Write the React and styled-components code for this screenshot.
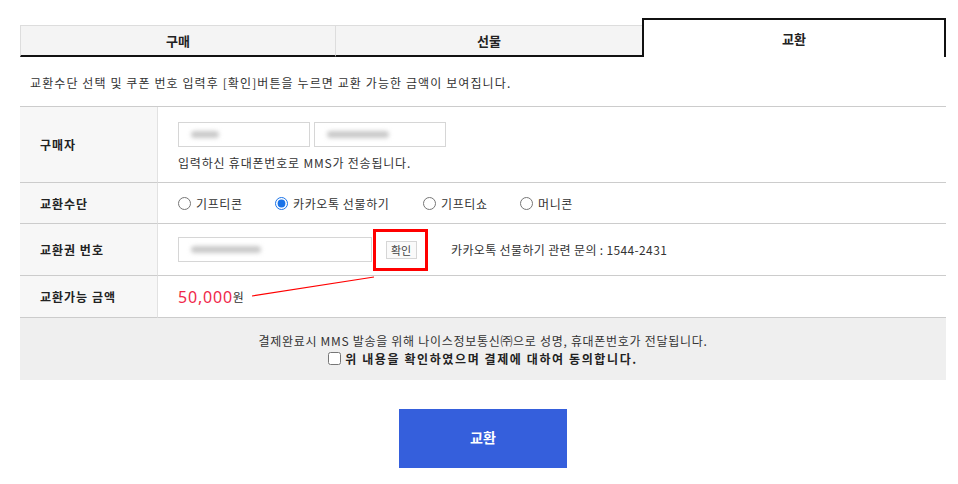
import styled, { createGlobalStyle } from 'styled-components'

const GlobalStyle = createGlobalStyle`
body {
  margin: 0;
  background: #fff;
  font-family: "Noto Sans CJK KR", "Noto Sans", sans-serif;
  color: #333;
}
`

const Page = styled.div`
width: 926px;
padding: 18px 0 0 20px;
`

const Tabs = styled.div`
display: flex;
height: 39px;
`

const Tab = styled.div`
width: ${({width}) => width};
flex: ${({grow}) => grow ? 1 : 'none'};
box-sizing: border-box;
display: flex;
align-items: center;
justify-content: center;
font-size: 13px;
font-weight: 700;
color: #222;
${({active}) => active ? `
  border: 2px solid #111;
  border-bottom: none;
  background: #fff;
` : `
  margin-top: 7px;
  background: #f4f4f4;
  border-top: 1px solid #ddd;
  border-left: 1px solid #ddd;
  border-bottom: 2px solid #111;
`}
`

const Notice = styled.p`
margin: 17px 0 14px 10px;
font-size: 12px;
line-height: 18px;
color: #333;
letter-spacing: 1.1px;
`

const Table = styled.div`
position: relative;
display: grid;
grid-template-columns: 138px 1fr;
border-top: 1px solid #ccc;
`

const Label = styled.div`
display: flex;
align-items: center;
height: ${({h}) => h}px;
box-sizing: border-box;
padding-left: 20px;
background: #f7f7f7;
border-right: 1px solid #e2e2e2;
border-bottom: 1px solid #ccc;
font-size: 12px;
font-weight: 700;
color: #222;
letter-spacing: 1px;
`

const Cell = styled.div`
display: flex;
flex-direction: ${({column}) => column ? 'column' : 'row'};
align-items: ${({column}) => column ? 'flex-start' : 'center'};
height: ${({h}) => h}px;
box-sizing: border-box;
padding: ${({column}) => column ? '15px 0 0 20px' : '0 0 0 20px'};
border-bottom: 1px solid #ccc;
font-size: 12px;
color: #333;
`

const InputRow = styled.div`
display: flex;
gap: 4px;
`

const Field = styled.div`
width: ${({w}) => w}px;
height: 25px;
box-sizing: border-box;
border: 1px solid #d6d6d6;
display: flex;
align-items: center;
padding-left: 12px;
`

const Blur = styled.span`
display: inline-block;
width: ${({w}) => w}px;
height: 7px;
border-radius: 4px;
background: #c9c9c9;
filter: blur(2px);
`

const Help = styled.div`
margin-top: 7px;
font-size: 12px;
color: #333;
letter-spacing: 0.8px;
`

const RadioGroup = styled.div`
display: flex;
align-items: center;
`

const RadioLabel = styled.label`
display: flex;
align-items: center;
width: ${({w}) => w}px;
font-size: 12px;
color: #333;
letter-spacing: 0.6px;

input {
  margin: 0 5px 0 0;
  width: 13px;
  height: 13px;
  accent-color: #1a73e8;
}
`

const Highlight = styled.div`
margin-left: 1px;
width: 55px;
height: 42px;
box-sizing: border-box;
border: 3px solid #f00;
display: flex;
align-items: center;
justify-content: center;
padding-left: 1px;
`

const SmallButton = styled.button`
width: 31px;
height: 18px;
padding: 0;
border: 1px solid #d6d6d6;
background: #fafafa;
font-family: inherit;
font-size: 11px;
color: #444;
`

const Contact = styled.span`
margin-left: 23px;
font-size: 12px;
color: #333;
letter-spacing: 0.35px;
`

const Amount = styled.span`
font-family: "Noto Sans", sans-serif;
font-size: 16px;
color: #f0284a;
letter-spacing: 0.8px;
`

const Won = styled.span`
font-size: 12px;
color: #333;
`

const Arrow = styled.svg`
position: absolute;
left: 210px;
top: 168px;
pointer-events: none;
`

const Agreement = styled.div`
background: #efefef;
height: 62px;
display: flex;
flex-direction: column;
align-items: center;
justify-content: center;
font-size: 12px;
color: #333;
letter-spacing: 0.7px;
`

const AgreeLine = styled.label`
display: flex;
align-items: center;
margin-top: 1px;
font-weight: 700;
color: #222;
letter-spacing: 1.6px;

input {
  margin: 0 4px 0 0;
  width: 13px;
  height: 13px;
}
`

const Footer = styled.div`
display: flex;
justify-content: center;
padding-top: 29px;
`

const SubmitButton = styled.button`
width: 168px;
height: 59px;
border: none;
background: #355fdc;
color: #fff;
font-family: inherit;
font-size: 14px;
font-weight: 700;
padding-bottom: 4px;
`

export default function App() {
  return (
    <>
      <GlobalStyle />
      <Page>
        <Tabs>
          <Tab width="315px">구매</Tab>
          <Tab width="307px">선물</Tab>
          <Tab grow active>교환</Tab>
        </Tabs>

        <Notice>교환수단 선택 및 쿠폰 번호 입력후 [확인]버튼을 누르면 교환 가능한 금액이 보여집니다.</Notice>

        <Table>
          <Label h={76}>구매자</Label>
          <Cell h={76} column>
            <InputRow>
              <Field w={132}><Blur w={28} /></Field>
              <Field w={132}><Blur w={62} /></Field>
            </InputRow>
            <Help>입력하신 휴대폰번호로 MMS가 전송됩니다.</Help>
          </Cell>

          <Label h={41}>교환수단</Label>
          <Cell h={41}>
            <RadioGroup>
              <RadioLabel w={97}><input type="radio" name="m" />기프티콘</RadioLabel>
              <RadioLabel w={148}><input type="radio" name="m" defaultChecked />카카오톡 선물하기</RadioLabel>
              <RadioLabel w={97}><input type="radio" name="m" />기프티쇼</RadioLabel>
              <RadioLabel w={80}><input type="radio" name="m" />머니콘</RadioLabel>
            </RadioGroup>
          </Cell>

          <Label h={52}>교환권 번호</Label>
          <Cell h={52}>
            <Field w={194}><Blur w={70} /></Field>
            <Highlight><SmallButton>확인</SmallButton></Highlight>
            <Contact>카카오톡 선물하기 관련 문의 : 1544-2431</Contact>
          </Cell>

          <Label h={42}>교환가능 금액</Label>
          <Cell h={42}>
            <Amount>50,000</Amount><Won>원</Won>
          </Cell>

          <Arrow width="150" height="30" viewBox="0 0 150 30">
            <line x1="22" y1="21" x2="144" y2="2" stroke="#f00" strokeWidth="1.2" />
          </Arrow>
        </Table>

        <Agreement>
          <div>결제완료시 MMS 발송을 위해 나이스정보통신㈜으로 성명, 휴대폰번호가 전달됩니다.</div>
          <AgreeLine><input type="checkbox" />위 내용을 확인하였으며 결제에 대하여 동의합니다.</AgreeLine>
        </Agreement>

        <Footer>
          <SubmitButton>교환</SubmitButton>
        </Footer>
      </Page>
    </>
  )
}
